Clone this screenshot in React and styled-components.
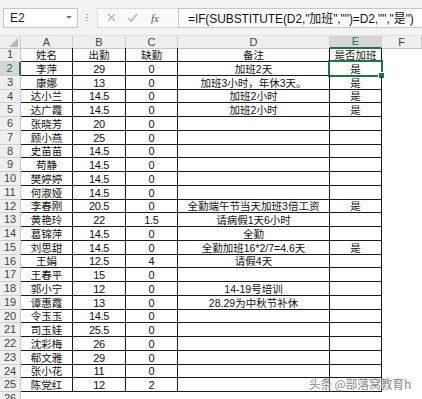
import React from "react";
import styled, { createGlobalStyle } from "styled-components";

const GlobalStyle = createGlobalStyle`
  html, body { margin: 0; padding: 0; background: #ffffff; }
  body { font-family: "Liberation Sans", "Noto Sans CJK SC", sans-serif; }
  * { box-sizing: border-box; }
`;

const GREEN = "#217346";
const COLS = "21px 52px 53px 52px 152px 52px 1fr";

const Window = styled.div`
  position: relative;
  width: 422px;
  height: 399px;
  overflow: hidden;
  background: #ffffff;
`;

const FormulaBar = styled.div`
  display: flex;
  align-items: center;
  height: 36px;
  padding: 0 0 0 3px;
  background: #f3f3f3;
  border-bottom: 1px solid #e2e2e2;
`;

const NameBox = styled.div`
  display: flex;
  align-items: center;
  justify-content: space-between;
  width: 75px;
  height: 20px;
  padding: 0 5px 0 6px;
  background: #ffffff;
  border: 1px solid #c6c6c6;
  font-size: 12px;
  color: #222;
`;

const Caret = styled.span`
  width: 0;
  height: 0;
  border-left: 3px solid transparent;
  border-right: 3px solid transparent;
  border-top: 3px solid #777;
`;

const Grip = styled.div`
  display: flex;
  flex-direction: column;
  gap: 2px;
  margin: 0 9px 0 8px;
  & > span { width: 2px; height: 1px; background: #a8a8a8; }
`;

const FxBox = styled.div`
  display: flex;
  align-items: center;
  width: 81px;
  height: 20px;
  padding-left: 9px;
  gap: 11px;
  background: #fafafa;
  border: 1px solid #dcdcdc;
  border-right: none;
`;

const Fx = styled.span`
  font-family: "Liberation Serif", serif;
  font-style: italic;
  font-size: 11px;
  color: #555;
  margin-left: 2px;
`;

const FormulaInput = styled.div`
  flex: 1;
  display: flex;
  align-items: center;
  height: 20px;
  padding-left: 9px;
  background: #ffffff;
  border: 1px solid #c6c6c6;
  border-right: none;
  font-size: 12px;
  letter-spacing: -0.1px;
  color: #111;
  white-space: nowrap;
  overflow: hidden;
`;

const Sheet = styled.div`
  display: flex;
  flex-direction: column;
`;

const Row = styled.div`
  display: grid;
  grid-template-columns: ${COLS};
  height: ${(p) => p.$h}px;
`;

const Corner = styled.div`
  position: relative;
  background: #efefef;
  border-right: 1px solid #c8c8c8;
  border-bottom: 1px solid #c8c8c8;
`;

const ColHead = styled.div`
  display: flex;
  align-items: center;
  justify-content: center;
  font-size: 11px;
  line-height: 1;
  color: ${(p) => (p.$sel ? GREEN : "#444")};
  background: ${(p) => (p.$sel ? "#d6d6d6" : "#efefef")};
  border-right: 1px solid #cfcfcf;
  border-bottom: ${(p) => (p.$sel ? `2px solid ${GREEN}` : "1px solid #c8c8c8")};
`;

const RowHead = styled.div`
  display: flex;
  align-items: ${(p) => (p.$top ? "flex-start" : "center")};
  justify-content: center;
  padding-top: ${(p) => (p.$top ? "1px" : "0")};
  font-size: 11px;
  line-height: 1;
  color: ${(p) => (p.$sel ? GREEN : "#444")};
  background: ${(p) => (p.$sel ? "#d6d6d6" : "#efefef")};
  border-right: ${(p) => (p.$sel ? `2px solid ${GREEN}` : "1px solid #c8c8c8")};
  border-bottom: 1px solid #d0d0d0;
`;

const Cell = styled.div`
  position: relative;
  display: flex;
  align-items: center;
  justify-content: center;
  white-space: nowrap;
  font-size: 10.5px;
  line-height: 1;
  color: #111;
  border-right: ${(p) => (p.$grid ? "1px solid #1a1a1a" : "none")};
  border-bottom: ${(p) => (p.$grid ? "1px solid #1a1a1a" : "none")};
  padding-top: 1px;
`;

const Num = styled.span`
  font-size: 11px;
  letter-spacing: -0.3px;
`;

const Selection = styled.div`
  position: absolute;
  left: -2px;
  top: -2px;
  right: -2px;
  bottom: -2px;
  border: 2px solid ${GREEN};
  pointer-events: none;
  &::after {
    content: "";
    position: absolute;
    right: -4px;
    bottom: -4px;
    width: 5px;
    height: 5px;
    background: ${GREEN};
    border: 1px solid #fff;
  }
`;

const Watermark = styled.div`
  position: absolute;
  right: 11px;
  bottom: 9px;
  font-family: "Noto Sans CJK SC", sans-serif;
  font-size: 12px;
  line-height: 1;
  color: #8a8a8a;
  text-shadow: 0 0 1px #fff, 0 0 1px #fff;
  letter-spacing: -0.3px;
`;

const data = [
  ["姓名", "出勤", "缺勤", "备注", "是否加班"],
  ["李萍", "29", "0", "加班2天", "是"],
  ["康娜", "13", "0", "加班3小时，年休3天。", "是"],
  ["达小兰", "14.5", "0", "加班2小时", "是"],
  ["达广霞", "14.5", "0", "加班2小时", "是"],
  ["张晓芳", "20", "0", "", ""],
  ["顾小燕", "25", "0", "", ""],
  ["史苗苗", "14.5", "0", "", ""],
  ["苟静", "14.5", "0", "", ""],
  ["樊婷婷", "14.5", "0", "", ""],
  ["何淑娅", "14.5", "0", "", ""],
  ["李春刚", "20.5", "0", "全勤端午节当天加班3倍工资", "是"],
  ["黄艳玲", "22", "1.5", "请病假1天6小时", ""],
  ["葛锦萍", "14.5", "0", "全勤", ""],
  ["刘思甜", "14.5", "0", "全勤加班16*2/7=4.6天", "是"],
  ["王娟", "12.5", "4", "请假4天", ""],
  ["王春平", "15", "0", "", ""],
  ["郭小宁", "12", "0", "14-19号培训", ""],
  ["谭惠霞", "13", "0", "28.29为中秋节补休", ""],
  ["令玉玉", "14.5", "0", "", ""],
  ["司玉娃", "25.5", "0", "", ""],
  ["沈彩梅", "26", "0", "", ""],
  ["郗文雅", "29", "0", "", ""],
  ["张小花", "11", "0", "", ""],
  ["陈党红", "12", "2", "", ""],
];

const heights = [14, 14, 14, 13];
const isNum = (s) => /^[0-9.]+$/.test(s);

export default function App() {
  return (
    <Window>
      <GlobalStyle />
      <FormulaBar>
        <NameBox>
          <span>E2</span>
          <Caret />
        </NameBox>
        <Grip>
          <span />
          <span />
          <span />
        </Grip>
        <FxBox>
          <svg width="9" height="9" viewBox="0 0 9 9">
            <path d="M1 1 L8 8 M8 1 L1 8" stroke="#b0b0b0" strokeWidth="1.1" fill="none" />
          </svg>
          <svg width="11" height="9" viewBox="0 0 11 9">
            <path d="M1 5 L4 8 L10 1" stroke="#b0b0b0" strokeWidth="1.2" fill="none" />
          </svg>
          <Fx>fx</Fx>
        </FxBox>
        <FormulaInput>=IF(SUBSTITUTE(D2,"加班","")=D2,"","是")</FormulaInput>
      </FormulaBar>
      <Sheet>
        <Row $h={12}>
          <Corner>
            <svg
              width="9"
              height="9"
              viewBox="0 0 9 9"
              style={{ position: "absolute", right: 2, bottom: 1 }}
            >
              <path d="M9 0 L9 9 L0 9 Z" fill="#b8b8b8" />
            </svg>
          </Corner>
          {["A", "B", "C", "D", "E", "F"].map((c) => (
            <ColHead key={c} $sel={c === "E"}>
              {c}
            </ColHead>
          ))}
        </Row>
        {data.map((r, i) => (
          <Row key={i} $h={heights[i % 4]}>
            <RowHead $sel={i === 1}>{i + 1}</RowHead>
            {r.map((v, j) => (
              <Cell key={j} $grid>
                {isNum(v) ? <Num>{v}</Num> : v}
                {i === 1 && j === 4 ? <Selection /> : null}
              </Cell>
            ))}
            <Cell />
          </Row>
        ))}
        <Row $h={14}>
          <RowHead $top>26</RowHead>
          <Cell />
          <Cell />
          <Cell />
          <Cell />
          <Cell />
          <Cell />
        </Row>
      </Sheet>
      <Watermark>头条 @部落窝教育h</Watermark>
    </Window>
  );
}
